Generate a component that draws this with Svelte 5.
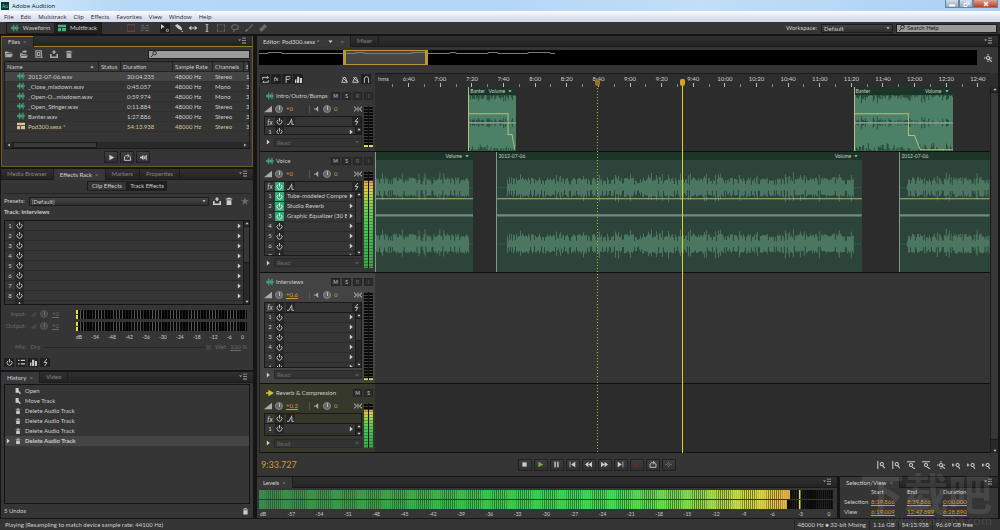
<script lang="ts">
	const menus = ['File', 'Edit', 'Multitrack', 'Clip', 'Effects', 'Favorites', 'View', 'Window', 'Help'];

	const files = [
		{ name: '2012-07-06.wav', duration: '20:04.235', channels: 'Stereo', bits: '1' },
		{ name: '_Close_mixdown.wav', duration: '0:45.057', channels: 'Mono', bits: '3' },
		{ name: '_Open-O...mixdown.wav', duration: '0:59.974', channels: 'Mono', bits: '3' },
		{ name: '_Open_Stinger.wav', duration: '0:11.884', channels: 'Stereo', bits: '3' },
		{ name: 'Banter.wav', duration: '1:27.886', channels: 'Stereo', bits: '3' },
		{ name: 'Pod300.sesx *', duration: '54:13.938', channels: 'Stereo', bits: '3', session: true }
	];

	const history = ['Open', 'Move Track', 'Delete Audio Track', 'Delete Audio Track', 'Delete Audio Track', 'Delete Audio Track'];

	const rackScale = ['dB', '-54', '-48', '-42', '-36', '-30', '-24', '-18', '-12', '-6', '0'];
	const levelScale = ['dB', ...Array.from({ length: 19 }, (_, i) => String(-57 + i * 3)), '0'];

	// view range in seconds
	const viewStart = 379;
	const viewLength = 389;
	const sessionLength = 3254;
	const pct = (t: number) => ((t - viewStart) / viewLength) * 100;
	const clock = (t: number) => `${Math.floor(t / 60)}:${String(t % 60).padStart(2, '0')}`;
	const ticks = Array.from({ length: 38 }, (_, i) => 390 + i * 10);

	const tracks = [
		{
			name: 'Intro/Outro/Bumps', kind: 'short', vol: '+0', pan: '0', slots: 1, level: 0, fx: [],
			clips: [
				{ name: 'Banter', start: 438, end: 468.3, loud: true },
				{ name: 'Banter', start: 681.7, end: 744.3, loud: true }
			]
		},
		{
			name: 'Voice', kind: 'tall', vol: '+0', pan: '0', slots: 7, level: 89,
			fx: ['Tube-modeled Compre', 'Studio Reverb', 'Graphic Equalizer (30 B'],
			clips: [
				{ name: '', start: 379, end: 441, from: 0, to: 94 },
				{ name: '2012-07-06', start: 455.8, end: 687.2, from: 10, to: 357 },
				{ name: '2012-07-06', start: 710.7, end: 768, from: 7, to: 90, noMenu: true }
			]
		},
		{ name: 'Interviews', kind: 'medium', vol: '+0.6', pan: '0', slots: 6, level: 0, fx: [], clips: [], selected: true },
		{ name: 'Reverb & Compression', kind: 'bus', vol: '+0.2', pan: '0', slots: 1, level: 86, fx: [], clips: [], bus: true }
	];

	const solid: Record<string, string> = {
		multi: 'M0 1h10v3H0zM0 5h4v4H0zM5 5h5v4H5z',
		folder: 'M0 2h4l1 1h4v1H2L0 8zM2 5h8L8 9H0z',
		import: 'M0 4h3l1 1h4v1H2L0 9zM2 7h8L8 10H0zM6 0l3 2-3 2V3H3V1h3z',
		save: 'M4 5V3H2l3-3 3 3H6v2zM0 5h2v3h6V5h2v5H0z',
		trash: 'M1 2h2V1h4v1h2v1H1zM2 4h6v6H2z',
		play: 'M2 1l7 4-7 4z',
		right: 'M3 1l5 4-5 4z',
		down: 'M1 3h8L5 8z',
		up: 'M1 7h8L5 2z',
		left: 'M7 1L2 5l5 4z',
		stop: 'M2 2h6v6H2z',
		pause: 'M2 1h2v8H2zM6 1h2v8H6z',
		prev: 'M1 1h1v8H1zM9 1v8L3 5z',
		rew: 'M5 1v8L0 5zM10 1v8L5 5z',
		ffw: 'M0 1v8l5-4zM5 1v8l5-4z',
		next: 'M8 1h1v8H8zM1 1v8l6-4z',
		rec: 'M5 1a4 4 0 1 1 0 8 4 4 0 0 1 0-8z',
		speaker: 'M0 4h3l4-4v10L3 6H0z',
		autoplay: 'M0 4h2l3-3v8L2 6H0zM6 3l2-1v6L6 7zM9 1h1v8H9z',
		ramp: 'M0 9L10 1v8z',
		star: 'M5 0l1.300 3.600H10L7 6l1 4-3-2.400L2 10l1-4-3-2.400h3.700z',
		menu: 'M0 3h4L2 5zM5 1h5v1H5zM5 4h5v1H5zM5 7h5v1H5z',
		bars: 'M0 5h2v5H0zM3 1h3v9H3zM7 3h3v7H7z',
		list: 'M0 1h2v2H0zM4 1h6v2H4zM0 6h2v2H0zM4 6h6v2H4z',
		move: 'M0 0l5 4-3 .3L0 7z',
		razor: 'M0 2l3-2 5 4 1 4-5-2zM8 9h2v1H8z',
		brush: 'M9 0l1 1-5 6-1-1zM0 10c1-3 1-4 3-4l1 1c0 2-2 3-4 3z',
		heal: 'M0 7l7-7 3 3-7 7z',
		bus: 'M0 4h3V1l7 4-7 4V6H0z',
		doc: 'M1 0h5v4l4 5-2 1-2-2H1z'
	};
	const line: Record<string, string> = {
		wave: 'M0 5h10M1.500 3v4M3.500 1v8M5.500 3v4M7.500 1v8',
		power: 'M3 2.500a3.500 3.500 0 1 0 4 0M5 0v5',
		search: 'M9 3.500a3 3 0 1 1-6 0 3 3 0 0 1 6 0zM4 6L0 10',
		newfile: 'M1 1h7v8H1zM3 3h3v4H3zM9 9h1',
		loop: 'M2 4H.700v5h8.600V4H8M2 2.500h5M5 0l2.500 2.500L5 5',
		arrows: 'M0 5h10M3 3L0 5l3 2M7 3l3 2-3 2',
		ibeam: 'M3 0h4M5 0v10M3 10h4',
		marquee: 'M0 1h2M4 1h2M8 1h2M0 9h2M4 9h2M8 9h2M.500 2v2M.500 6v2M9.500 2v2M9.500 6v2',
		lasso: 'M3 7C0 6 0 1 5 1s6 5 1 6H3l1 3',
		swap: 'M1 5V2h8L7 0M9 2L7 4M9 6v3H1l2-2',
		fork: 'M3 10V1h6M3 5h4l2-2',
		metro: 'M4 2L1 9h8L6 2zM2 2l6 6',
		magnet: 'M2 10V4a3 3 0 0 1 6 0v6',
		io: 'M0 2l3 3-3 3M10 2L7 5l3 3M5 2v6',
		pre: 'M0 9h3l4-8M7 3v6h3',
		bolt: 'M7 0L3 5h4L4 10',
		skip: 'M0 5h3M7 5h3M5 1v2M5 7v2M3 3l4 4M7 3L3 7',
		zoomin: 'M1 0v10M8 4a2 2 0 1 1-4 0 2 2 0 0 1 4 0zM7 6l3 3',
		zoomtop: 'M0 1h10M7 5a2 2 0 1 1-4 0 2 2 0 0 1 4 0zM6 7l4 3',
		zoomfull: 'M7 5a2 2 0 1 1-4 0 2 2 0 0 1 4 0zM6 6l4 4M0 5h2M8 5h2M5 0v2M5 8v2',
		zoompair: 'M0 5h3M1 3v4M9 5a2 2 0 1 1-4 0 2 2 0 0 1 4 0zM8 7l2 3',
		dim: 'M0 1h10v8H0z',
		rows: 'M0 2h4M6 2h4M0 5h10M0 8h3M5 8h5'
	};

	const transport = ['stop', 'play', 'pause', 'prev', 'rew', 'ffw', 'next', 'rec', 'loop', 'skip'];
	const zooms = ['zoomin', 'zoomin', 'zoomtop', 'zoomtop', 'zoomfull', 'zoompair', 'zoompair', 'zoompair'];

	function random(seed: number) {
		let s = seed;
		return () => {
			s = (s * 16807) % 2147483647;
			return s / 2147483647;
		};
	}

	// voice: one vertical stroke per pixel around the middle of each channel
	function voicePath(from: number, to: number, seed: number) {
		const r = random(seed);
		let d = '';
		for (let x = from; x < to; x++) {
			const spike = r() > 0.9 ? 5 : 0;
			const quiet = r() > 0.82 ? 0.4 : 1;
			const up = (6 + r() * 4 + spike) * quiet;
			const down = (7 + r() * 3 + spike) * quiet;
			for (const mid of [27, 83]) {
				d += `M${x}.5 ${(mid - up).toFixed(1)}V${(mid + down).toFixed(1)}`;
			}
		}
		return d;
	}

	// music: body is filled, these are the dark notches along the channel edges
	function notchPath(width: number, seed: number) {
		const r = random(seed);
		let d = '';
		for (let x = 0; x < width; x++) {
			const a = r() * r() * 9;
			d += `M${x}.5 0v${a.toFixed(1)}M${x}.5 ${(27 - a * 0.7).toFixed(1)}v${(a * 1.5).toFixed(1)}M${x}.5 55v-${(r() * r() * 9).toFixed(1)}`;
		}
		return d;
	}

	const clipWidth = (c: { start: number; end: number }) => Math.round((c.end - c.start) * 1.579);
	const envelope = (w: number) =>
		w > 60 ? `M0 18.500H54V40h6l6 14H${w}` : `M0 18.500H40V39h4l3 15`;

	let fileSelected = $state(0);
	let historyCurrent = $state(5);
	let mix = $state(100);
</script>

{#snippet icon(name: string)}
	<svg class="icon" viewBox="0 0 10 10" aria-hidden="true">
		{#if solid[name]}
			<path d={solid[name]} fill="currentColor" />
		{:else}
			<path d={line[name]} fill="none" stroke="currentColor" stroke-width="1.3" />
		{/if}
		{#if name === 'move'}
			<circle cx="8" cy="8" r="1.5" fill="none" stroke="currentColor" />
		{/if}
	</svg>
{/snippet}

{#snippet panelMenu()}
	<button class="panel-menu" aria-label="Panel menu">{@render icon('menu')}</button>
{/snippet}

{#snippet scrollbar(place: string)}
	<div class="vscroll {place}">
		{@render icon('up')}
		<div class="thumb"></div>
		{@render icon('down')}
	</div>
{/snippet}

{#snippet slot(n: number, label: string)}
	<li>
		<span class="num">{n}</span>
		<button class="power" class:on={label} aria-label="Power">{@render icon('power')}</button>
		<span class="slot-name">{label}</span>
		<button class="more" aria-label="Choose effect">{@render icon('right')}</button>
	</li>
{/snippet}

<div class="app">
	<header class="titlebar">
		<span class="logo">Au</span>
		<span>Adobe Audition</span>
		<div class="window-buttons">
			<button aria-label="Minimize"><svg viewBox="0 0 10 6"><path d="M2 4.500h6" stroke="#fff" stroke-width="2" /></svg></button>
			<button aria-label="Restore"><svg viewBox="0 0 10 6"><path d="M3 2.500h3v3H3zM5 1h3v3" fill="none" stroke="#fff" /></svg></button>
			<button class="close" aria-label="Close"><svg viewBox="0 0 10 6"><path d="M3 1l4 4M7 1L3 5" stroke="#fff" stroke-width="1.5" /></svg></button>
		</div>
	</header>

	<nav class="menubar">
		{#each menus as menu}
			<button>{menu}</button>
		{/each}
	</nav>

	<div class="toolbar">
		<div class="modes">
			<button><i class="green">{@render icon('wave')}</i>Waveform</button>
			<button class="pressed"><i class="green">{@render icon('multi')}</i>Multitrack</button>
		</div>
		<div class="tools">
			<button class="red" aria-label="Spectral">{@render icon('dim')}</button>
			<button class="off" aria-label="Pitch">{@render icon('rows')}</button>
			<button class="pressed gap" aria-label="Move">{@render icon('move')}</button>
			<button aria-label="Razor">{@render icon('razor')}</button>
			<button aria-label="Slip">{@render icon('arrows')}</button>
			<button aria-label="Time selection">{@render icon('ibeam')}</button>
			<button class="off" aria-label="Marquee">{@render icon('marquee')}</button>
			<button class="off" aria-label="Lasso">{@render icon('lasso')}</button>
			<button class="off" aria-label="Brush">{@render icon('brush')}</button>
			<button class="off" aria-label="Healing">{@render icon('heal')}</button>
		</div>
		<label class="workspace" for="workspace">Workspace:</label>
		<div class="select workspace-select">
			<select id="workspace"><option>Default</option></select>
			{@render icon('down')}
		</div>
		<div class="search help-search">
			{@render icon('search')}
			<input type="text" aria-label="Search Help" placeholder="Search Help" />
		</div>
	</div>

	<main>
		<aside>
			<section class="panel active">
				<div class="tabs">
					<button class="tab current">Files <b>×</b></button>
					{@render panelMenu()}
				</div>
				<div class="file-tools">
					<button aria-label="Open">{@render icon('folder')}</button>
					<button aria-label="Import">{@render icon('import')}</button>
					<button aria-label="New">{@render icon('newfile')}</button>
					<button aria-label="Insert">{@render icon('save')}</button>
					<button aria-label="Delete">{@render icon('trash')}</button>
					<div class="search">
						{@render icon('search')}
						<input type="text" aria-label="Filter files" />
					</div>
				</div>
				<div class="files-box">
					<table class="files">
						<colgroup><col class="c-name" /><col class="c-status" /><col class="c-dur" /><col class="c-rate" /><col class="c-chan" /><col /></colgroup>
						<thead>
							<tr><th>Name<span class="sort">{@render icon('up')}</span></th><th>Status</th><th>Duration</th><th>Sample Rate</th><th>Channels</th><th>B</th></tr>
						</thead>
						<tbody>
							{#each files as file, i}
								<tr class:selected={fileSelected === i} class:session={file.session} onclick={() => (fileSelected = i)}>
									<td><i class:green={!file.session}>{@render icon(file.session ? 'multi' : 'wave')}</i>{file.name}</td>
									<td></td>
									<td class="dur">{file.duration}</td>
									<td>48000 Hz</td>
									<td>{file.channels}</td>
									<td>{file.bits}</td>
								</tr>
							{/each}
						</tbody>
					</table>
					<div class="hscroll">{@render icon('left')}<div class="thumb"></div>{@render icon('right')}</div>
				</div>
				<div class="preview">
					<button class="key" aria-label="Play">{@render icon('play')}</button>
					<button class="key" aria-label="Loop">{@render icon('loop')}</button>
					<button class="key" aria-label="Auto-play">{@render icon('autoplay')}</button>
				</div>
			</section>

			<section class="panel">
				<div class="tabs">
					<button class="tab">Media Browser</button>
					<button class="tab current">Effects Rack <b>×</b></button>
					<button class="tab">Markers</button>
					<button class="tab">Properties</button>
					{@render panelMenu()}
				</div>
				<div class="fx-switch">
					<button>Clip Effects</button><button class="pressed">Track Effects</button>
				</div>
				<div class="presets">
					<label for="preset">Presets:</label>
					<div class="select">
						<select id="preset"><option>(Default)</option></select>
						{@render icon('down')}
					</div>
					<button aria-label="Save preset">{@render icon('save')}</button>
					<button aria-label="Delete preset">{@render icon('trash')}</button>
					<button class="off" aria-label="Favorite">{@render icon('star')}</button>
				</div>
				<h3>Track: Interviews</h3>
				<div class="rack">
					<ol class="slots">
						{#each Array(9) as _, i}
							{@render slot(i + 1, '')}
						{/each}
					</ol>
					{@render scrollbar('')}
				</div>
				<div class="gains">
					{#each ['Input:', 'Output:'] as label}
						<span class="gain-label">{label}</span>
						<i class="faint">{@render icon('ramp')}</i>
						<span class="knob"></span>
						<span class="dim under">+0</span>
						<div class="rack-meter"></div>
					{/each}
					<div class="rack-scale">
						{#each rackScale as n}<span>{n}</span>{/each}
					</div>
				</div>
				<div class="mix">
					<label for="mix">Mix:</label>
					<span>Dry</span>
					<input id="mix" type="range" min="0" max="100" bind:value={mix} />
					<span>Wet</span>
					<span><span class="under">{mix}</span> %</span>
				</div>
				<div class="rack-tools">
					<button class="pressed" aria-label="Rack power">{@render icon('power')}</button>
					<button class="pressed" aria-label="List">{@render icon('list')}</button>
					<button class="pressed" aria-label="Pre-render">{@render icon('bars')}</button>
					<button class="pressed" aria-label="Apply">{@render icon('bolt')}</button>
				</div>
			</section>

			<section class="panel grow">
				<div class="tabs">
					<button class="tab current">History <b>×</b></button>
					<button class="tab">Video</button>
					{@render panelMenu()}
				</div>
				<ul class="history">
					{#each history as step, i}
						<li>
							<button class:current={historyCurrent === i} onclick={() => (historyCurrent = i)}>
								<span class="pointer">{#if historyCurrent === i}{@render icon('right')}{/if}</span>
								{@render icon(i < 2 ? 'doc' : 'trash')}
								{step}
							</button>
						</li>
					{/each}
				</ul>
				<div class="undo">
					<span>5 Undos</span>
					<button aria-label="Delete history">{@render icon('trash')}</button>
				</div>
			</section>
		</aside>

		<div class="work">
			<section class="panel grow">
				<div class="tabs">
					<button class="tab current doc">Editor: Pod300.sesx * <i>{@render icon('down')}</i> <b>×</b></button>
					<button class="tab">Mixer</button>
					{@render panelMenu()}
				</div>
				<div class="overview">
					<div class="overview-strip">
						<svg viewBox="0 0 718 15" preserveAspectRatio="none" aria-hidden="true">
							<path d="M0 3.500h9v-1h14v1h74v-1h8v1h48v-1h16v1h22v-1h6v1h32v-1h10v1h30v-1h22v1h5" fill="none" stroke="#6b8078" />
						</svg>
						<div
							class="window"
							style:left="{(viewStart / sessionLength) * 100}%"
							style:width="{(viewLength / sessionLength) * 100}%"
						></div>
					</div>
					<button aria-label="Zoom navigator">{@render icon('zoomfull')}</button>
				</div>

				<div class="timeline">
					<div class="track-tools">
						<button class="pressed" aria-label="Inputs">{@render icon('swap')}</button>
						<button class="pressed fx" aria-label="Effects">fx</button>
						<button class="pressed" aria-label="Sends">{@render icon('fork')}</button>
						<button class="pressed" aria-label="EQ">{@render icon('bars')}</button>
						<button class="push" aria-label="Metronome">{@render icon('metro')}</button>
						<button aria-label="Monitor">{@render icon('metro')}</button>
						<button class="pressed" aria-label="Snap">{@render icon('magnet')}</button>
					</div>
					<div class="ruler">
						<span class="hms">hms</span>
						{#each ticks as t}
							<div class="tick" class:major={t % 20 === 0} style:left="{pct(t)}%">
								{#if t % 20 === 0}<span>{clock(t)}</span>{/if}
							</div>
						{/each}
					</div>
					<div class="corner"></div>

					{#each tracks as track, ti}
						<div class="track-head {track.kind}" class:selected={track.selected}>
							<div class="track-title">
								<i class={track.bus ? 'yellow' : 'green'}>{@render icon(track.bus ? 'bus' : 'wave')}</i>
								<span class="track-name">{track.name}</span>
								<button>M</button>
								<button>S</button>
								{#if !track.bus}
									<button class="off">R</button>
									<button class="off">I</button>
								{/if}
							</div>
							<div class="strip">
								<div class="volume">
									{@render icon('ramp')}
									<span class="knob"></span>
									<span class="orange vol" class:under={track.vol !== '+0'}>{track.vol}</span>
									<i class="spk">{@render icon('speaker')}</i>
									<span class="knob"></span>
									<span class="orange">{track.pan}</span>
									<button class="push" aria-label="Mono">{@render icon('io')}</button>
								</div>
								<div class="fx-box">
									<div class="fx-row">
										<em>fx</em>
										<button class="power" class:on={track.fx.length} aria-label="Effects power">{@render icon('power')}</button>
										<button class="power" aria-label="Pre/post">{@render icon('pre')}</button>
										{#if !track.bus}<button class="power push" aria-label="Pre-render">{@render icon('bolt')}</button>{/if}
									</div>
									<div class="fx-list">
										<ol class="slots">
											{#each Array(track.slots) as _, i}
												{@render slot(i + 1, track.fx[i] ?? '')}
											{/each}
										</ol>
										{@render scrollbar('')}
									</div>
								</div>
								<div class="automation">
									<button class="more" aria-label="Show automation">{@render icon('right')}</button>
									<div class="select off">
										<select aria-label="Automation mode"><option>Read</option></select>
										{@render icon('down')}
									</div>
								</div>
							</div>
							<div class="meter">
								<div class="lit" style:height="{track.level}%"></div>
								{#if !track.level}<div class="floor"></div>{/if}
							</div>
						</div>
						<div class="lane" class:selected={track.selected}>
							{#each track.clips as clip, ci}
								{@const w = clipWidth(clip)}
								<div
									class="clip"
									class:loud={clip.loud}
									style:left="{pct(clip.start)}%"
									style:width="{pct(clip.end) - pct(clip.start)}%"
								>
									<div class="clip-head">
										<span>{clip.name}</span>
										{#if !clip.noMenu}<span class="clip-menu">Volume <i>{@render icon('down')}</i></span>{/if}
									</div>
									{#if clip.loud}
										<svg viewBox="0 0 {w} 55" preserveAspectRatio="none" aria-hidden="true">
											<path d={notchPath(w, 71 + ci)} stroke="#2b4d3e" />
											<path d="M0 27.500H{w}" stroke="#829a94" stroke-width="1.5" />
											<path d={envelope(w)} fill="none" stroke="#b9bd79" />
										</svg>
									{:else}
										<svg viewBox="0 0 {w} 111" preserveAspectRatio="none" aria-hidden="true">
											<path d="M0 27.500H{w}M0 83.500H{w}" stroke="#38594a" />
											<path d={voicePath(clip.from, Math.min(clip.to, w), 977 + ti * 31 + ci)} stroke="#4b7761" />
											<path d="M0 38.500H{w}" stroke="#b0b374" />
											<path d="M0 55H{w}" stroke="#6d8b80" stroke-width="2" />
										</svg>
									{/if}
								</div>
							{/each}
						</div>
					{/each}

					{@render scrollbar('track-scroll')}

					<div class="heads">
						<div class="head start" style:left="{pct(519.5)}%"></div>
						<div class="head" style:left="{pct(573.4)}%"></div>
					</div>
				</div>

				<div class="transport">
					<span class="time">9:33.727</span>
					<div class="keys">
						{#each transport as t}
							<button class="key {t}" aria-label={t}>{@render icon(t)}</button>
						{/each}
					</div>
					<div class="zooms">
						{#each zooms as z}
							<button aria-label="Zoom">{@render icon(z)}</button>
						{/each}
					</div>
				</div>
			</section>

			<div class="bottom">
				<section class="panel">
					<div class="tabs">
						<button class="tab current">Levels <b>×</b></button>
						{@render panelMenu()}
					</div>
					<div class="levels">
						{#each [92.5, 92] as level}
							<div class="level">
								<div class="bar" style:clip-path="inset(0 {100 - level}% 0 0)"></div>
								<div class="peak"></div>
							</div>
						{/each}
						<div class="level-scale">
							{#each levelScale as n}<span>{n}</span>{/each}
						</div>
					</div>
				</section>
				<section class="panel">
					<div class="tabs">
						<button class="tab current">Selection/View <b>×</b></button>
						{@render panelMenu()}
					</div>
					<table class="ranges">
						<thead><tr><td></td><th>Start</th><th>End</th><th>Duration</th></tr></thead>
						<tbody>
							<tr><th>Selection</th><td>8:39.866</td><td>8:39.866</td><td>0:00.000</td></tr>
							<tr><th>View</th><td>6:19.009</td><td>12:47.899</td><td>6:28.890</td></tr>
						</tbody>
					</table>
				</section>
			</div>
		</div>
	</main>

	<footer>
		<span class="message">Playing (Resampling to match device sample rate: 44100 Hz)</span>
		<span>48000 Hz ● 32-bit Mixing</span>
		<span>1.16 GB</span>
		<span>54:13.938</span>
		<span>96.69 GB free</span>
	</footer>

	<div class="watermark">
		<strong>下载吧</strong>
		<span>www.xiazaiba.com</span>
	</div>
</div>

<style>
	:global(body) {
		background: #151515;
	}

	.app {
		position: relative;
		display: flex;
		flex-direction: column;
		min-height: 100vh;
		overflow: hidden;
		box-sizing: border-box;
		color: #cdcdcd;
		font: 6px/10px Lato, 'Open Sans', sans-serif;
	}

	.app :global(*) {
		box-sizing: border-box;
	}

	button,
	input,
	select {
		font: inherit;
		color: inherit;
		background: none;
		border: 0;
		padding: 0;
		margin: 0;
		min-width: 0;
	}

	button {
		display: inline-flex;
		align-items: center;
		justify-content: center;
		white-space: nowrap;
	}

	ol,
	ul {
		list-style: none;
		margin: 0;
		padding: 0;
	}

	i {
		display: inline-flex;
	}

	.icon {
		display: block;
		flex: none;
		width: 8px;
		height: 8px;
	}

	.green { color: #46b083; }
	.yellow { color: #d3bd3b; }
	.off, .dim { color: #6a6a6a; }
	.faint { color: #484848; }
	.red { color: #7c4343; }
	.under { text-decoration: underline; }
	.push { margin-left: auto; }

	.pressed {
		background: #202020;
	}

	/* window chrome */
	.titlebar,
	.menubar {
		font-family: 'Open Sans', 'Noto Sans', sans-serif;
	}

	.titlebar {
		display: flex;
		align-items: center;
		gap: 3px;
		height: 11px;
		padding-left: 1px;
		color: #111;
		background: linear-gradient(90deg, #d8ecf8, #b5d8f6 12%, #b4d6f7 50%, #c2def8 70%, #a9d0f4);
	}

	.logo {
		width: 8px;
		height: 8px;
		font-size: 5px;
		line-height: 8px;
		text-align: center;
		color: #61d3b4;
		background: #053a33;
	}

	.window-buttons {
		display: flex;
		align-self: flex-start;
		margin: 0 2px 0 auto;
	}

	.window-buttons button {
		width: 14px;
		height: 8px;
		background: linear-gradient(#d3dfec, #93a9c2);
		border: 1px solid #70849b;
		border-top: 0;
	}

	.window-buttons svg {
		width: 10px;
		height: 6px;
	}

	.window-buttons .close {
		width: 25px;
		background: linear-gradient(#e2a193, #c03a1d);
	}

	.menubar {
		display: flex;
		gap: 7px;
		height: 11px;
		padding-left: 4px;
		color: #1d1d1d;
		background: linear-gradient(#fdfdff, #dde2f1 60%, #d3daec);
	}

	.toolbar {
		display: flex;
		align-items: center;
		height: 13px;
		padding: 0 3px 0 6px;
		background: #353535;
		border-bottom: 1px solid #151515;
	}

	.modes {
		display: flex;
		border: 1px solid #1b1b1b;
	}

	.modes button {
		gap: 4px;
		width: 47px;
		height: 10px;
	}

	.tools {
		display: flex;
		gap: 4px;
		padding-left: 24px;
	}

	.tools button {
		width: 10px;
		height: 10px;
	}

	.tools .gap {
		margin-left: 6px;
	}

	.workspace {
		margin-left: auto;
		margin-right: 4px;
	}

	.select {
		display: flex;
		align-items: center;
		flex: 1;
		height: 9px;
		padding-right: 2px;
		background: linear-gradient(#444, #2e2e2e);
		border: 1px solid #1d1d1d;
	}

	.select select {
		flex: 1;
		appearance: none;
		height: 7px;
		padding: 0 2px;
		line-height: 7px;
	}

	.select .icon {
		width: 4px;
		height: 4px;
	}

	.select.off {
		background: #333;
		border-color: #292929;
	}

	.workspace-select {
		flex: none;
		width: 72px;
		margin-right: 3px;
	}

	.search {
		display: flex;
		align-items: center;
		gap: 2px;
		height: 9px;
		padding: 0 2px;
		color: #161616;
		background: #9a9a9a;
		border: 1px solid #1d1d1d;
	}

	.search .icon {
		width: 6px;
		height: 6px;
	}

	.search input {
		width: 100%;
		height: 7px;
	}

	.search input::placeholder {
		color: #161616;
		opacity: 1;
	}

	.help-search {
		width: 101px;
	}

	/* panels */
	main {
		flex: 1;
		display: grid;
		grid-template-columns: 252px minmax(0, 1fr);
		gap: 4px;
		padding: 1px 2px 1px 1px;
	}

	aside,
	.work {
		display: flex;
		flex-direction: column;
		gap: 2px;
		min-width: 0;
	}

	.work {
		gap: 1px;
	}

	.panel {
		display: flex;
		flex-direction: column;
		min-width: 0;
		background: #353535;
	}

	.panel.active {
		border: 1px solid #6e5a25;
		border-top: 0;
	}

	.grow {
		flex: 1;
	}

	.tabs {
		display: flex;
		height: 11px;
		background: linear-gradient(#303030, #232323);
		border-bottom: 1px solid #1a1a1a;
	}

	.active .tabs {
		border-bottom-color: #a07e2b;
	}

	.tab {
		gap: 3px;
		height: 10px;
		padding: 0 6px;
		color: #858585;
		border-right: 1px solid #1d1d1d;
	}

	.tab.current {
		height: 11px;
		color: #d4d4d4;
		background: #383838;
	}

	.active .tab.current {
		border-top: 1px solid #a07e2b;
	}

	.tab b {
		font-weight: 400;
		color: #8a8a8a;
	}

	.tab i {
		padding: 0 4px 0 6px;
	}

	.tab .icon {
		width: 5px;
		height: 5px;
	}

	.panel-menu {
		margin-left: auto;
		padding-right: 6px;
		color: #aaa;
	}

	.key {
		width: 14px;
		height: 12px;
		background: linear-gradient(#3e3e3e, #303030);
		border: 1px solid #202020;
	}

	.key .icon {
		width: 7px;
		height: 7px;
	}

	.key.loop .icon {
		width: 8px;
	}

	/* files */
	.file-tools {
		display: flex;
		align-items: center;
		gap: 7px;
		height: 14px;
		padding: 0 2px 0 3px;
		color: #a9a9a9;
	}

	.file-tools .search {
		width: 102px;
		margin-left: auto;
	}

	.files-box {
		margin: 0 2px;
		border: 1px solid #191919;
	}

	.files {
		width: 100%;
		table-layout: fixed;
		border-spacing: 0;
		white-space: nowrap;
		margin-bottom: 10px;
	}

	.c-name { width: 94px; }
	.c-status { width: 22px; }
	.c-dur { width: 52px; }
	.c-rate { width: 40px; }
	.c-chan { width: 31px; }

	.files th,
	.files td {
		height: 10px;
		padding: 0 2px;
		overflow: hidden;
		text-align: left;
		font-weight: 400;
		line-height: 9px;
	}

	.files th {
		background: #3a3a3a;
		border-right: 1px solid #222;
		border-bottom: 1px solid #222;
	}

	.files td {
		border-bottom: 1px solid #303030;
	}

	.files td i {
		margin: 0 3px 0 10px;
		vertical-align: top;
	}

	.files .dur {
		padding-left: 6px;
	}

	.files .selected {
		background: #454545;
	}

	.files .session {
		color: #d6c292;
	}

	.sort {
		float: right;
		padding: 3px 2px 0 0;
	}

	.sort .icon {
		width: 4px;
		height: 4px;
	}

	.hscroll {
		display: flex;
		align-items: center;
		height: 6px;
		background: #292929;
		padding: 0 2px;
	}

	.hscroll .icon {
		width: 4px;
		height: 4px;
	}

	.hscroll .thumb {
		width: 84px;
		height: 6px;
		margin: 0 auto 0 2px;
		background: #3a3a3a;
		border: 1px solid #1b1b1b;
	}

	.preview {
		display: flex;
		justify-content: center;
		gap: 2px;
		padding: 2px 0 3px;
	}

	/* effects rack */
	.fx-switch {
		display: flex;
		justify-content: center;
		margin: 1px 3px 0;
		padding-bottom: 2px;
		border-bottom: 1px solid #222;
	}

	.fx-switch button {
		width: 40px;
		height: 10px;
		border: 1px solid #1d1d1d;
	}

	.presets {
		display: flex;
		align-items: center;
		gap: 4px;
		padding: 2px 4px 1px 3px;
	}

	.presets .off {
		margin-left: 4px;
	}

	h3 {
		margin: 0 3px 3px;
		font: inherit;
		font-weight: 700;
	}

	.rack {
		display: flex;
		height: 85px;
		margin: 0 3px;
		overflow: hidden;
		border: 1px solid #151515;
	}

	.slots {
		flex: 1;
		min-width: 0;
	}

	.slots li {
		display: flex;
		align-items: center;
		height: 10px;
		border-bottom: 1px solid #2a2a2a;
	}

	.num {
		width: 10px;
		text-align: center;
	}

	.power {
		flex: none;
		width: 9px;
		height: 9px;
		background: #262626;
	}

	.power + .power {
		margin-left: 2px;
	}

	.power.push {
		margin-left: auto;
	}

	.power .icon {
		width: 7px;
		height: 7px;
	}

	.power.on {
		color: #e5fff2;
		background: #37a878;
	}

	.slot-name {
		flex: 1;
		min-width: 0;
		padding-left: 3px;
		overflow: hidden;
		white-space: nowrap;
	}

	.more {
		flex: none;
		width: 8px;
	}

	.more .icon {
		width: 6px;
		height: 6px;
	}

	.vscroll {
		display: flex;
		flex-direction: column;
		align-items: center;
		width: 6px;
		overflow: hidden;
		background: #282828;
		border-left: 1px solid #1a1a1a;
	}

	.vscroll .icon {
		width: 4px;
		height: 5px;
	}

	.vscroll .thumb {
		flex: 0 1 44%;
		width: 100%;
		margin-bottom: auto;
		background: #363636;
		border: solid #1c1c1c;
		border-width: 1px 0;
	}

	.gains {
		display: grid;
		grid-template-columns: 22px 6px 8px 20px 1fr;
		align-items: center;
		column-gap: 4px;
		row-gap: 2px;
		padding: 4px 6px 0 3px;
	}

	.gain-label {
		text-align: right;
		color: #6a6a6a;
	}

	.gains .icon {
		width: 6px;
	}

	.knob {
		width: 8px;
		height: 8px;
		border-radius: 50%;
		background: linear-gradient(#bbb, #bbb) center 0 / 1px 4px no-repeat, #666;
		border: 1px solid #858585;
	}

	.gains .knob {
		opacity: 0.4;
	}

	.rack-meter {
		height: 9px;
		background:
			linear-gradient(#353535, #353535) 0 4px / 3px 1px no-repeat,
			linear-gradient(#e8df37, #e8df37) 0 0 / 2px 100% no-repeat,
			repeating-linear-gradient(90deg, transparent 0 8px, #000b 12px 15px, transparent 19px),
			repeating-linear-gradient(90deg, #080808 0 1px, #555 1px 2px, #080808 2px 3px);
	}

	.rack-scale {
		grid-column: 5;
		display: flex;
		justify-content: space-between;
		padding-right: 3px;
		font-size: 5px;
		line-height: 8px;
	}

	.mix {
		display: flex;
		align-items: center;
		gap: 4px;
		padding: 1px 6px 0 14px;
		color: #6a6a6a;
	}

	.mix input {
		flex: 1;
		height: 8px;
		appearance: none;
		background: linear-gradient(#262626, #262626) center / 100% 1px no-repeat;
	}

	.mix input::-webkit-slider-thumb {
		appearance: none;
		width: 5px;
		height: 5px;
		background: #444;
	}

	.rack-tools {
		display: flex;
		gap: 2px;
		padding: 6px 3px 3px;
	}

	.rack-tools button {
		width: 10px;
		height: 9px;
	}

	.rack-tools .icon {
		width: 7px;
		height: 7px;
	}

	/* history */
	.history {
		flex: 1;
		margin: 1px 3px 0;
		padding-top: 1px;
		border: 1px solid #151515;
	}

	.history button {
		justify-content: flex-start;
		gap: 4px;
		width: 100%;
		height: 10px;
	}

	.history .icon {
		width: 6px;
		height: 6px;
	}

	.history li {
		display: flex;
	}

	.history .current {
		font-weight: 700;
		background: #454545;
	}

	.pointer {
		width: 6px;
	}

	.undo {
		display: flex;
		justify-content: space-between;
		padding: 2px 4px 2px 3px;
	}

	.undo .icon {
		width: 7px;
	}

	/* editor */
	.overview {
		display: flex;
		align-items: center;
		padding: 3px 2px 8px;
	}

	.overview-strip {
		position: relative;
		flex: 1;
		height: 15px;
		background: #000;
	}

	.overview-strip svg {
		display: block;
		width: 100%;
		height: 100%;
	}

	.overview button {
		width: 17px;
		margin-left: 2px;
	}

	.window {
		position: absolute;
		top: 0;
		bottom: 0;
		background: linear-gradient(#8888, #555c);
		border: solid #c0923a;
		border-width: 1px 3px;
	}

	.timeline {
		position: relative;
		flex: 1;
		display: grid;
		grid-template-columns: 116px minmax(0, 1fr) 8px;
		grid-template-rows: 14px repeat(4, auto);
		margin: 0 0 0 2px;
	}

	.track-tools {
		display: flex;
		align-items: center;
		gap: 1px;
		padding: 0 4px 2px 1px;
	}

	.track-tools button {
		width: 10px;
		height: 10px;
	}

	.track-tools .icon {
		width: 7px;
		height: 7px;
	}

	.fx,
	em {
		font-style: italic;
	}

	.ruler {
		position: relative;
		overflow: hidden;
		background: #2d2d2d;
		border-top: 1px solid #1a1a1a;
	}

	.hms {
		padding-left: 3px;
	}

	.tick {
		position: absolute;
		bottom: 0;
		width: 1px;
		height: 3px;
		background: #888;
	}

	.tick.major {
		height: 4px;
		background: #bbb;
	}

	.tick span {
		position: absolute;
		bottom: 4px;
		left: 50%;
		transform: translateX(-50%);
		line-height: 8px;
	}

	.corner {
		background: #2d2d2d;
	}

	.track-head {
		display: grid;
		grid-column: 1;
		grid-template-columns: 98px 9px;
		align-content: start;
		column-gap: 2px;
		padding: 0 0 3px 4px;
		background: #363636;
		border-bottom: 1px solid #101010;
		border-left: 1px solid #222;
	}

	.track-head.selected { background: #434343; }
	.track-head.bus { background: #37382c; }

	.track-title {
		grid-column: 1 / -1;
		display: flex;
		align-items: center;
		gap: 2px;
		height: 16px;
		padding: 2px 0 0 2px;
	}

	.track-name {
		flex: 1;
		min-width: 0;
		white-space: nowrap;
	}

	.track-title button {
		flex: none;
		width: 9px;
		height: 8px;
		font-size: 5px;
		background: #2c2c2c;
		border: 1px solid #242424;
	}

	.volume {
		display: flex;
		align-items: center;
		gap: 3px;
		height: 12px;
		color: #aaa;
	}

	.orange {
		color: #d39b33;
	}

	.vol {
		width: 20px;
	}

	.spk {
		padding-left: 4px;
		border-left: 1px solid #555;
	}

	.spk .icon {
		width: 6px;
	}

	.volume button {
		width: 8px;
		height: 8px;
	}

	.fx-box {
		margin-top: 1px;
		border: 1px solid #1a1a1a;
		background: #353535;
	}

	.fx-row {
		display: flex;
		align-items: center;
		height: 10px;
		border-bottom: 1px solid #1a1a1a;
	}

	.bus .fx-row { background: #37382c; }

	em {
		width: 10px;
		text-align: center;
		font-size: 7px;
	}

	.fx-list {
		display: flex;
		overflow: hidden;
	}

	.short .fx-list { height: 7px; }
	.tall .fx-list { height: 63px; }
	.medium .fx-list { height: 54px; }
	.bus .fx-list { height: 11px; }

	.automation {
		display: flex;
		align-items: center;
		gap: 2px;
		height: 10px;
		margin-top: 2px;
	}

	.meter {
		position: relative;
		display: flex;
		flex-direction: column;
		justify-content: flex-end;
		margin-top: 3px;
		background: repeating-linear-gradient(#3c3c3c 0 1px, #0b0b0b 1px 3px);
	}

	.meter::after {
		content: '';
		position: absolute;
		inset: 0;
		background:
			linear-gradient(90deg, transparent 4px, #111 4px 5px, transparent 5px),
			repeating-linear-gradient(transparent 0 2px, #0004 2px 3px);
	}

	.lit {
		background: linear-gradient(#e0a03f, #dccf46 10%, #6cd14d 32%, #3fc352 60%, #3aa14a);
	}

	.floor {
		height: 2px;
		background: #e8df37;
	}

	.lane {
		position: relative;
		grid-column: 2;
		overflow: hidden;
		background: #2c2c2c;
		border-bottom: 1px solid #101010;
	}

	.lane.selected { background: #353535; }

	.clip {
		position: absolute;
		top: 0;
		bottom: 0;
		display: flex;
		flex-direction: column;
		background: #2c4439;
		border-left: 1px solid #7d9a8c;
	}

	.clip.loud {
		background: #4c8067;
		border-left-color: #b9bd79;
	}

	.clip svg {
		display: block;
		width: 100%;
		flex: 1;
		min-height: 0;
	}

	.clip-head {
		display: flex;
		justify-content: space-between;
		height: 8px;
		padding: 0 4px 0 1px;
		font-size: 5px;
		line-height: 8px;
		white-space: nowrap;
		background: #1c3529;
	}

	.clip-menu {
		display: flex;
		align-items: center;
		gap: 3px;
	}

	.clip .clip-menu .icon {
		flex: none;
		width: 4px;
		height: 4px;
	}

	.track-scroll {
		grid-area: 2 / 3 / 6 / 4;
		width: 8px;
	}

	.track-scroll .thumb {
		flex-basis: 95%;
	}

	.heads {
		position: absolute;
		inset: 6px 8px 0 116px;
		pointer-events: none;
	}

	.head {
		position: absolute;
		top: 0;
		bottom: 0;
		width: 1px;
		background: #ddd21f;
	}

	.head::before {
		content: '';
		position: absolute;
		top: 0;
		left: -2px;
		width: 5px;
		height: 7px;
		border-radius: 2px 2px 3px 3px;
		background: #d7a422;
	}

	.head.start {
		background: repeating-linear-gradient(#b8b03c 0 1px, transparent 1px 3px);
	}

	.head.start::before {
		background: #90742b;
	}

	.transport {
		display: grid;
		grid-template-columns: 45fr auto 55fr;
		align-items: center;
		height: 23px;
		padding: 0 8px 0 4px;
	}

	.time {
		font-size: 9px;
		color: #d39b33;
	}

	.keys {
		display: flex;
		gap: 2px;
	}

	.key.play { color: #74b13f; }
	.key.rec { color: #552f2f; }
	.key.skip { color: #6a6a6a; }

	.zooms {
		display: flex;
		justify-content: flex-end;
		gap: 6px;
	}

	.zooms button {
		width: 9px;
	}

	/* bottom panels */
	.bottom {
		display: grid;
		grid-template-columns: minmax(0, 1fr) 158px;
		gap: 3px;
	}

	.levels {
		display: grid;
		row-gap: 1px;
		padding: 2px 4px 0 2px;
	}

	.level {
		position: relative;
		height: 9px;
		background: #0a0a0a;
	}

	.bar {
		height: 100%;
		background: linear-gradient(90deg, #3c8d4c, #3aa54b 20%, #38cf4d 42%, #41e152 62%, #7be04b 74%, #d4dc49 85%, #e8c946 90%, #e39a42 94%);
	}

	.level::after {
		content: '';
		position: absolute;
		inset: 0;
		background: repeating-linear-gradient(90deg, transparent 0 1px, #3339 1px 2px);
		mask-image: repeating-linear-gradient(90deg, #0003 0 5px, #000 10px 20px, #0003 25px);
	}

	.peak {
		position: absolute;
		top: 0;
		left: 94%;
		width: 2px;
		height: 9px;
		background: #e8df37;
	}

	.level-scale {
		display: flex;
		justify-content: space-between;
		font-size: 5px;
		line-height: 8px;
	}

	.level-scale span {
		width: 8px;
		text-align: center;
	}

	.ranges {
		margin: 0 0 0 4px;
		width: 135px;
		table-layout: fixed;
		border-spacing: 0;
		text-align: left;
		line-height: 9px;
		color: #d39b33;
	}

	.ranges th,
	.ranges td {
		height: 10px;
		padding: 0;
		font-weight: 400;
	}

	.ranges tbody td {
		text-decoration: underline;
	}

	.ranges thead td {
		width: 27px;
	}

	.ranges thead th,
	.ranges thead td {
		height: 8px;
		line-height: 8px;
	}

	.ranges th {
		color: #cdcdcd;
	}

	footer {
		display: flex;
		align-items: center;
		height: 11px;
		padding: 0 24px 0 5px;
		background: #353535;
	}

	footer span {
		padding: 0 3px;
		border-left: 1px solid #222;
		white-space: nowrap;
	}

	footer .message {
		flex: 1;
		padding: 0;
		border: 0;
	}

	.watermark {
		position: absolute;
		right: 8px;
		bottom: 5px;
		z-index: 2;
		display: flex;
		flex-direction: column;
		align-items: flex-end;
		color: #fff;
		opacity: 0.09;
		pointer-events: none;
		font-family: 'Noto Sans CJK SC', sans-serif;
	}

	.watermark strong {
		font-size: 44px;
		line-height: 46px;
	}

	.watermark span {
		font-size: 12px;
		line-height: 10px;
	}
</style>
